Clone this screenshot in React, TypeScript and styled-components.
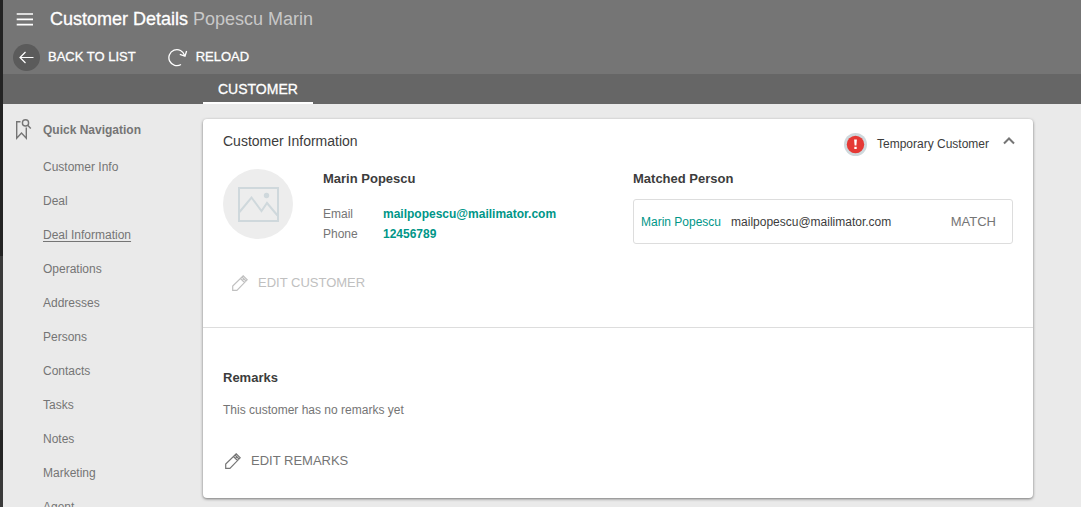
import React from "react";
import styled, { createGlobalStyle } from "styled-components";

const GlobalStyle = createGlobalStyle`
  *, *::before, *::after { box-sizing: border-box; }
  body {
    margin: 0;
    background: #eaeaea;
    color: #3c3c3c;
    font: 12px/20px "Liberation Sans", Arial, sans-serif;
  }
  h1, h2, h3, p, ul, dl, dd { margin: 0; padding: 0; }
  button { font: inherit; color: inherit; background: none; border: 0; padding: 0; cursor: pointer; }
  svg { display: block; flex: none; }
`;

const Shell = styled.div`
  display: flex;
  height: 100vh;
  overflow: hidden;
`;

const Rail = styled.div`
  flex: none;
  width: 3px;
  background: linear-gradient(#232323 0 256px, #3a3a3a 256px 430px, #232323 430px 470px, #3a3a3a 470px);
`;

const Page = styled.div`
  flex: 1;
  min-width: 0;
  display: flex;
  flex-direction: column;
`;

const Header = styled.header`
  flex: none;
  background: #757575;
  color: #fff;
`;

const TitleBar = styled.div`
  display: flex;
  align-items: center;
  gap: 16px;
  height: 38px;
  padding-left: 13px;
`;

const MenuButton = styled.button`
  padding: 0;
`;

const Title = styled.h1`
  font-size: 18px;
  font-weight: 400;
  line-height: 20px;
  -webkit-text-stroke: 0.3px #fff;
`;

const TitleName = styled.span`
  color: #c8c8c8;
  -webkit-text-stroke: 0;
`;

const Toolbar = styled.div`
  display: flex;
  align-items: center;
  gap: 32px;
  height: 36px;
  padding: 2px 0 0 10px;
`;

const ToolButton = styled.button`
  display: flex;
  align-items: center;
  gap: 8px;
  font-size: 13px;
  -webkit-text-stroke: 0.3px #fff;
`;

const RoundIcon = styled.span`
  display: grid;
  place-items: center;
  width: 27px;
  height: 27px;
  border-radius: 50%;
  background: #5b5b5b;
`;

const TabBar = styled.nav`
  display: flex;
  height: 30px;
  padding-left: 200px;
  background: #666;
`;

const Tab = styled.a`
  padding: 5px 15px 3px;
  border-bottom: 2px solid #fff;
  color: #fff;
  font-size: 14px;
  text-decoration: none;
  -webkit-text-stroke: 0.3px #fff;
`;

const Body = styled.div`
  flex: 1;
  min-height: 0;
  display: flex;
  overflow: hidden;
`;

const Sidebar = styled.aside`
  flex: none;
  width: 200px;
  padding: 14px 0 0 11px;
  color: #757575;
`;

const SidebarTitle = styled.h2`
  display: flex;
  align-items: center;
  gap: 11px;
  height: 24px;
  font-size: 12px;
`;

const NavList = styled.ul`
  list-style: none;
  padding: 8px 0 0 29px;
`;

const NavItem = styled.li`
  height: 34px;
  padding: 7px 0;
`;

const NavLink = styled.a<{ $active?: boolean }>`
  color: inherit;
  text-decoration: ${(p) => (p.$active ? "underline" : "none")};
  text-underline-offset: 2px;
`;

const Main = styled.main`
  flex: 1;
  min-width: 0;
  padding: 15px 48px 0 0;
`;

const Card = styled.section`
  background: #fff;
  border-radius: 4px;
  box-shadow: 0 1px 3px rgba(0, 0, 0, 0.5);
`;

const CardHeader = styled.header`
  display: flex;
  justify-content: space-between;
  padding: 12px 17px 0 20px;
  height: 50px;
`;

const CardTitle = styled.h2`
  font-size: 14px;
  font-weight: 400;
`;

const Status = styled.div`
  display: flex;
  align-items: center;
  gap: 10px;
  height: 26px;
`;

const CollapseButton = styled.button`
  padding: 0 0 6px 3px;
`;

const Profile = styled.div`
  display: grid;
  grid-template-columns: 70px minmax(0, 1fr) 380px;
  gap: 30px;
  padding: 0 20px;
`;

const Avatar = styled.div`
  display: grid;
  place-items: center;
  width: 70px;
  height: 70px;
  border-radius: 50%;
  background: #ededed;
`;

const SubTitle = styled.h3`
  font-size: 13px;
  line-height: 20px;
`;

const Contact = styled.dl`
  display: grid;
  grid-template-columns: 60px 1fr;
  padding-top: 15px;
`;

const Label = styled.dt`
  color: #757575;
`;

const ContactLink = styled.a<{ $bold?: boolean }>`
  color: #009688;
  font-weight: ${(p) => (p.$bold ? 700 : 400)};
  text-decoration: none;
`;

const MatchBox = styled.div`
  display: flex;
  align-items: center;
  gap: 10px;
  height: 45px;
  margin-top: 10px;
  padding: 0 16px 0 7px;
  border: 1px solid #ddd;
  border-radius: 3px;
`;

const MatchButton = styled.button`
  margin-left: auto;
  color: #757575;
  font-size: 13px;
`;

const EditButton = styled.button`
  display: flex;
  align-items: center;
  gap: 10px;
  height: 20px;
  color: #757575;
  font-size: 13px;
  &:disabled {
    color: #c0c0c0;
    cursor: default;
  }
`;

const InfoSection = styled.div`
  padding-bottom: 34px;
  border-bottom: 1px solid #ddd;
`;

const EditCustomerRow = styled.div`
  padding: 29px 29px 0;
`;

const EditRemarksRow = styled.div`
  padding: 31px 22px 0;
`;

const RemarksSection = styled.div`
  padding: 40px 0 27px;
`;

const RemarksText = styled.div`
  display: grid;
  gap: 12px;
  padding: 0 20px;
`;

const Remark = styled.p`
  color: #757575;
`;

const MenuIcon = () => (
  <svg width="18" height="14" viewBox="0 0 18 14" fill="none" stroke="#fff" strokeWidth="1.7" aria-hidden="true">
    <path d="M.7 2h16.300M.7 7.300h16.300M.7 12.600h16.300" />
  </svg>
);

const BackIcon = () => (
  <svg width="15" height="13" viewBox="0 0 15 13" fill="none" stroke="#fff" strokeWidth="1.2" aria-hidden="true">
    <path d="M14.5 6.5H1M6.5 1L1 6.5l5.500 5.500" />
  </svg>
);

const ReloadIcon = () => (
  <svg width="20" height="19" viewBox="0 0 20 19" fill="none" stroke="#fff" strokeWidth="1.3" aria-hidden="true">
    <path d="M13 16.500A8 8 0 1 1 16.600 7.500M11.800 6.300L17 8.200L18.600 3" />
  </svg>
);

const BookmarkSearchIcon = () => (
  <svg width="18" height="22" viewBox="0 0 18 22" fill="none" stroke="#757575" strokeWidth="1.4" aria-hidden="true">
    <path d="M6.500 2.700H2.700V19.200L7.500 14L12.300 19.200V8.500" />
    <circle cx="11.500" cy="3.900" r="3.100" />
    <path d="M13.700 6.200L16.800 9.400" />
  </svg>
);

const PictureIcon = () => (
  <svg width="41" height="35" viewBox="0 0 41 35" fill="none" stroke="#cfd8dc" strokeWidth="2" aria-hidden="true">
    <rect x="1" y="1" width="39" height="33" />
    <path d="M1.500 25L13.500 10.500L23.500 24L29 16L39.500 28.500" />
    <circle cx="28.500" cy="8.500" r="2.700" fill="#cfd8dc" stroke="none" />
  </svg>
);

const AlertIcon = () => (
  <svg width="23" height="23" viewBox="0 0 23 23" role="img" aria-label="Warning">
    <circle cx="11.500" cy="11.500" r="11.500" fill="#cfd8dc" />
    <circle cx="11.500" cy="11.500" r="8.700" fill="#e53935" />
    <path d="M10.100 6.500h2.800l-.5 6h-1.800z" fill="#fff" />
    <rect x="10.300" y="13.800" width="2.400" height="2.200" fill="#fff" />
  </svg>
);

const ChevronUpIcon = () => (
  <svg width="14" height="10" viewBox="0 0 14 10" fill="none" stroke="#757575" strokeWidth="2" aria-hidden="true">
    <path d="M2 7.500L7 2.500L12 7.500" />
  </svg>
);

const PencilIcon = () => (
  <svg width="16" height="16" viewBox="0 0 16 16" fill="none" stroke="currentColor" strokeWidth="1.2" aria-hidden="true">
    <path d="M.7 15.300V11L11.200.8L15.200 4.800L4.900 15.300ZM8.500 3.500L12.500 7.500M10 2L14 6M10.500 5.500L12 4" />
  </svg>
);

const navItems = [
  "Customer Info", "Deal", "Deal Information", "Operations", "Addresses",
  "Persons", "Contacts", "Tasks", "Notes", "Marketing", "Agent",
];

export default function App() {
  return (
    <>
      <GlobalStyle />
      <Shell>
        <Rail />
        <Page>
          <Header>
            <TitleBar>
              <MenuButton aria-label="Menu"><MenuIcon /></MenuButton>
              <Title>Customer Details <TitleName>Popescu Marin</TitleName></Title>
            </TitleBar>
            <Toolbar>
              <ToolButton><RoundIcon><BackIcon /></RoundIcon>BACK TO LIST</ToolButton>
              <ToolButton><ReloadIcon />RELOAD</ToolButton>
            </Toolbar>
            <TabBar><Tab href="#customer">CUSTOMER</Tab></TabBar>
          </Header>
          <Body>
            <Sidebar>
              <SidebarTitle><BookmarkSearchIcon />Quick Navigation</SidebarTitle>
              <NavList>
                {navItems.map((item) => (
                  <NavItem key={item}>
                    <NavLink href="#section" $active={item === "Deal Information"}>{item}</NavLink>
                  </NavItem>
                ))}
              </NavList>
            </Sidebar>
            <Main>
              <Card>
                <CardHeader>
                  <CardTitle>Customer Information</CardTitle>
                  <Status>
                    <AlertIcon />
                    <span>Temporary Customer</span>
                    <CollapseButton aria-label="Collapse"><ChevronUpIcon /></CollapseButton>
                  </Status>
                </CardHeader>
                <InfoSection>
                  <Profile>
                    <Avatar><PictureIcon /></Avatar>
                    <div>
                      <SubTitle>Marin Popescu</SubTitle>
                      <Contact>
                        <Label>Email</Label>
                        <dd><ContactLink $bold href="mailto:mailpopescu@mailimator.com">mailpopescu@mailimator.com</ContactLink></dd>
                        <Label>Phone</Label>
                        <dd><ContactLink $bold href="tel:12456789">12456789</ContactLink></dd>
                      </Contact>
                    </div>
                    <div>
                      <SubTitle>Matched Person</SubTitle>
                      <MatchBox>
                        <ContactLink href="#person">Marin Popescu</ContactLink>
                        <span>mailpopescu@mailimator.com</span>
                        <MatchButton>MATCH</MatchButton>
                      </MatchBox>
                    </div>
                  </Profile>
                  <EditCustomerRow>
                    <EditButton disabled><PencilIcon />EDIT CUSTOMER</EditButton>
                  </EditCustomerRow>
                </InfoSection>
                <RemarksSection>
                  <RemarksText>
                    <SubTitle>Remarks</SubTitle>
                    <Remark>This customer has no remarks yet</Remark>
                  </RemarksText>
                  <EditRemarksRow>
                    <EditButton><PencilIcon />EDIT REMARKS</EditButton>
                  </EditRemarksRow>
                </RemarksSection>
              </Card>
            </Main>
          </Body>
        </Page>
      </Shell>
    </>
  );
}
